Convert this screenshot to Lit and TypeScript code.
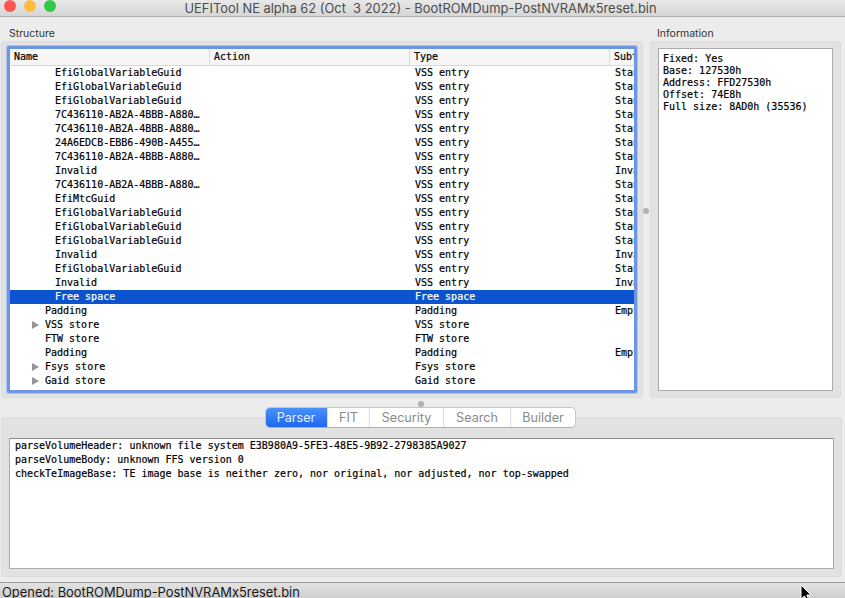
import { LitElement, html, css } from 'lit';
import { customElement } from 'lit/decorators.js';
import { classMap } from 'lit/directives/class-map.js';

type Row = {
  name: string;
  type: string;
  sub?: string;
  depth?: number;
  arrow?: boolean;
  selected?: boolean;
};

const EFI = 'EfiGlobalVariableGuid';
const LONG = '7C436110-AB2A-4BBB-A880…';

const vss = (name: string, sub = 'Stan'): Row => ({ name, type: 'VSS entry', sub, depth: 2 });

const rows: Row[] = [
  vss(EFI),
  vss(EFI),
  vss(EFI),
  vss(LONG),
  vss(LONG),
  vss('24A6EDCB-EBB6-490B-A455…'),
  vss(LONG),
  vss('Invalid', 'Inva'),
  vss(LONG),
  vss('EfiMtcGuid'),
  vss(EFI),
  vss(EFI),
  vss(EFI),
  vss('Invalid', 'Inva'),
  vss(EFI),
  vss('Invalid', 'Inva'),
  { name: 'Free space', type: 'Free space', depth: 2, selected: true },
  { name: 'Padding', type: 'Padding', sub: 'Empt', depth: 1 },
  { name: 'VSS store', type: 'VSS store', depth: 1, arrow: true },
  { name: 'FTW store', type: 'FTW store', depth: 1 },
  { name: 'Padding', type: 'Padding', sub: 'Empt', depth: 1 },
  { name: 'Fsys store', type: 'Fsys store', depth: 1, arrow: true },
  { name: 'Gaid store', type: 'Gaid store', depth: 1, arrow: true },
];

const info = ['Fixed: Yes', 'Base: 127530h', 'Address: FFD27530h', 'Offset: 74E8h', 'Full size: 8AD0h (35536)'];

const messages = [
  'parseVolumeHeader: unknown file system E3B980A9-5FE3-48E5-9B92-2798385A9027',
  'parseVolumeBody: unknown FFS version 0',
  'checkTeImageBase: TE image base is neither zero, nor original, nor adjusted, nor top-swapped',
];

const tabs = [
  { label: 'Parser', width: 62 },
  { label: 'FIT', width: 42 },
  { label: 'Security', width: 74 },
  { label: 'Search', width: 67 },
  { label: 'Builder', width: 65 },
];

@customElement('app-root')
export class AppRoot extends LitElement {
  static styles = css`
    :host {
      display: block;
      position: relative;
      width: 845px;
      height: 598px;
      overflow: hidden;
      background: #ececec;
      font-family: 'DejaVu Sans Mono', monospace;
      font-size: 10px;
      color: #000;
    }

    .titlebar {
      height: 16px;
      display: flex;
      justify-content: center;
      align-items: center;
      position: relative;
      background: linear-gradient(#e8e8e8, #d6d6d6);
      border-bottom: 1px solid #b1b1b1;
      font-family: Inter, 'Liberation Sans', sans-serif;
      font-size: 12.9px;
      color: #4d4d4d;
    }

    .title {
      white-space: pre;
      margin-right: 4px;
    }

    .lights {
      position: absolute;
      left: 4px;
      top: 0;
      display: flex;
      gap: 8px;
    }

    .light {
      width: 12px;
      height: 12px;
      border-radius: 50%;
    }

    .red { background: #fc5753; }
    .yellow { background: #fdbc40; }
    .green { background: #33c748; }

    .top {
      display: flex;
      height: 381px;
    }

    .pane {
      display: flex;
      flex-direction: column;
    }

    .pane-structure { width: 643px; padding-left: 1px; box-sizing: border-box; }
    .pane-info { width: 191px; margin-left: 7px; }

    .pane-label {
      height: 24px;
      box-sizing: border-box;
      padding: 10px 0 0 8px;
      font-family: Inter, 'Liberation Sans', sans-serif;
      font-size: 10.5px;
      line-height: 13px;
      color: #333;
    }

    .pane-info .pane-label { padding-left: 7px; }

    .box {
      flex: 1;
      min-height: 0;
      background: #e2e2e2;
      border: 1px solid #dcdcdc;
      border-radius: 3px;
      box-sizing: border-box;
    }

    .box-structure { padding: 4px 5px 4px 5px; }
    .box-info { padding: 6px 7px 6px 7px; }

    .table {
      height: 100%;
      box-sizing: border-box;
      border: 3px solid #6d96e3;
      border-radius: 2px;
      box-shadow: 0 0 0 1px #a9c2ee;
      background: #fff;
      overflow: hidden;
      -webkit-text-stroke: 0.2px;
    }

    .head {
      display: flex;
      height: 17px;
      box-sizing: border-box;
      background: #f6f6f6;
      border-bottom: 1px solid #d8d8d8;
      line-height: 16px;
    }

    .hcell {
      width: 200px;
      flex: none;
      box-sizing: border-box;
      padding-left: 4px;
      border-right: 1px solid #dcdcdc;
    }

    .hcell.last { border-right: none; width: 24px; overflow: hidden; }

    .row {
      display: flex;
      height: 14px;
      line-height: 14px;
    }

    .row.selected {
      background: #0c54cf;
      color: #fff;
    }

    .cell-name {
      width: 200px;
      flex: none;
      position: relative;
      box-sizing: border-box;
    }

    .cell-name.d1 { padding-left: 35px; }
    .cell-name.d2 { padding-left: 45px; }

    .arrow {
      position: absolute;
      left: 22px;
      top: 3px;
      width: 0;
      height: 0;
      border-left: 7px solid #959595;
      border-top: 4px solid transparent;
      border-bottom: 4px solid transparent;
    }

    .cell-action {
      width: 200px;
      flex: none;
    }

    .cell-type {
      width: 200px;
      flex: none;
      box-sizing: border-box;
      padding-left: 5px;
    }

    .cell-sub {
      width: 24px;
      flex: none;
      box-sizing: border-box;
      padding-left: 5px;
      overflow: hidden;
      white-space: nowrap;
    }

    .textbox {
      height: 100%;
      box-sizing: border-box;
      background: #fff;
      border: 1px solid #ababab;
      padding: 4px;
      line-height: 12px;
      white-space: pre;
      -webkit-text-stroke: 0.2px;
    }

    .dot {
      width: 6px;
      height: 6px;
      border-radius: 50%;
      background: #b2b2b2;
    }

    .vhandle {
      position: absolute;
      left: 643px;
      top: 208px;
    }

    .lower {
      position: relative;
      height: 184px;
      padding: 19px 3px 0 1px;
      box-sizing: border-box;
    }

    .hhandle {
      position: absolute;
      left: 418px;
      top: 3px;
    }

    .tabbox {
      height: 160px;
      background: #e2e2e2;
      border: 1px solid #dcdcdc;
      border-radius: 3px;
      box-sizing: border-box;
      padding: 20px 7px 7px 7px;
    }

    .tabbox .textbox {
      padding: 0 5px;
      line-height: 14px;
      border-top-color: #8f8f8f;
    }

    .tabs {
      position: absolute;
      top: 9px;
      left: 265px;
      display: flex;
      height: 21px;
      box-sizing: border-box;
      background: #fff;
      border: 1px solid #c6c6c6;
      border-bottom-color: #b0b0b0;
      border-radius: 5px;
      font-family: Inter, 'Liberation Sans', sans-serif;
      font-size: 12.6px;
      color: #8a8a8a;
      overflow: hidden;
    }

    .tab {
      box-sizing: border-box;
      display: flex;
      align-items: center;
      justify-content: center;
      border-left: 1px solid #dedede;
    }

    .tab.active {
      border-left: none;
      color: #e6efff;
      background: linear-gradient(#4a93fb, #1c66ee);
      margin: -1px 0 -1px -1px;
    }

    .status {
      height: 16px;
      border-top: 1px solid #9b9b9b;
      background: linear-gradient(#e2e2e2, #cdcdcd);
      padding-left: 2px;
      font-family: Inter, 'Liberation Sans', sans-serif;
      font-size: 12.9px;
      line-height: 20px;
      color: #1a1a1a;
      overflow: hidden;
    }

    .cursor {
      position: absolute;
      left: 800px;
      top: 584px;
    }
  `;

  render() {
    return html`
      <div class="titlebar">
        <div class="lights">
          <span class="light red"></span>
          <span class="light yellow"></span>
          <span class="light green"></span>
        </div>
        <span class="title">UEFITool NE alpha 62 (Oct  3 2022) - BootROMDump-PostNVRAMx5reset.bin</span>
      </div>

      <div class="top">
        <div class="pane pane-structure">
          <div class="pane-label">Structure</div>
          <div class="box box-structure">
            <div class="table">
              <div class="head">
                <div class="hcell">Name</div>
                <div class="hcell">Action</div>
                <div class="hcell">Type</div>
                <div class="hcell last">Subt</div>
              </div>
              ${rows.map((r) => this.renderRow(r))}
            </div>
          </div>
        </div>
        <div class="pane pane-info">
          <div class="pane-label">Information</div>
          <div class="box box-info">
            <div class="textbox">${info.join('\n')}</div>
          </div>
        </div>
      </div>
      <div class="dot vhandle"></div>

      <div class="lower">
        <div class="dot hhandle"></div>
        <div class="tabbox">
          <div class="textbox">${messages.join('\n')}</div>
        </div>
        <div class="tabs">
          ${tabs.map(
            (t, i) => html`<div class=${classMap({ tab: true, active: i === 0 })} style="width:${t.width}px">${t.label}</div>`
          )}
        </div>
      </div>

      <div class="status">Opened: BootROMDump-PostNVRAMx5reset.bin</div>

      <svg class="cursor" width="12" height="18" viewBox="0 0 12 18">
        <path d="M1 1 L1 15 L4.5 12 L7 17 L9 16 L6.8 11 L11 11 Z" fill="#000" stroke="#fff" stroke-width="1" />
      </svg>
    `;
  }

  renderRow(r: Row) {
    return html`
      <div class=${classMap({ row: true, selected: !!r.selected })}>
        <div class="cell-name d${r.depth}">
          ${r.arrow ? html`<span class="arrow"></span>` : ''}${r.name}
        </div>
        <div class="cell-action"></div>
        <div class="cell-type">${r.type}</div>
        <div class="cell-sub">${r.sub ?? ''}</div>
      </div>
    `;
  }
}
